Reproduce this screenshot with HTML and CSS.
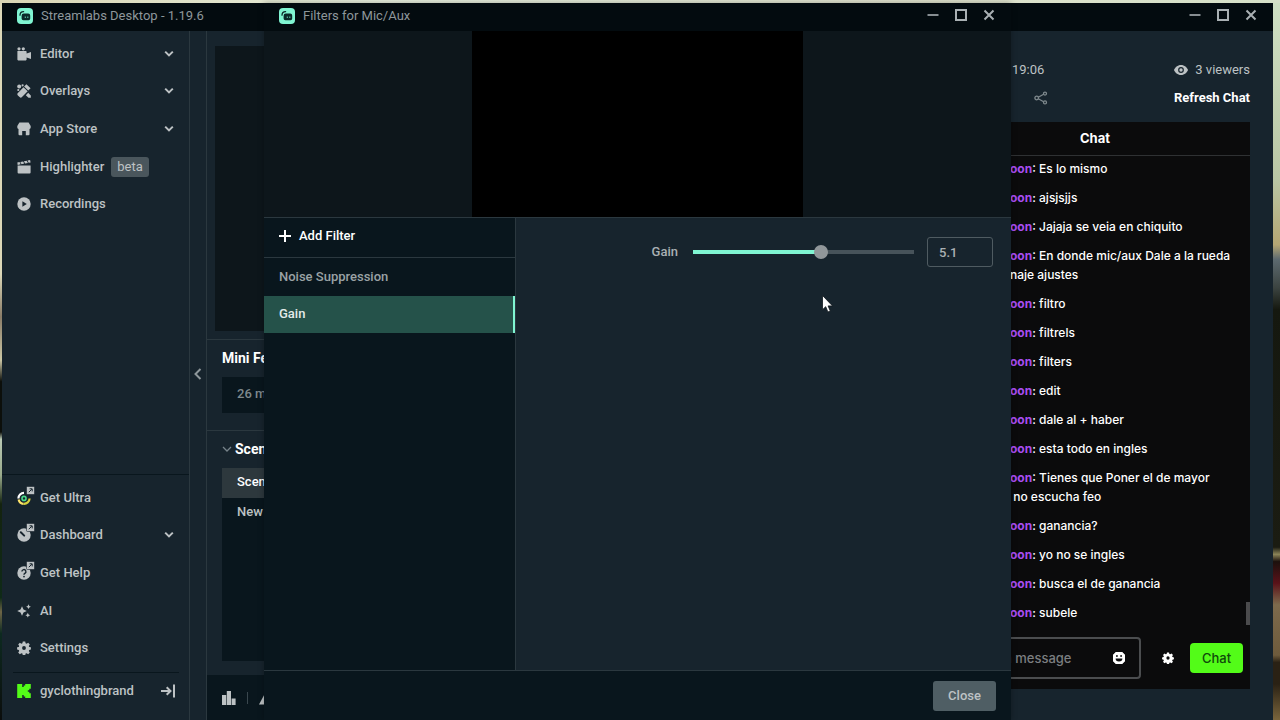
FILE: index.html
```html
<!DOCTYPE html>
<html lang="en">

<head>
    <meta charset="UTF-8">
    <meta name="viewport" content="width=device-width, initial-scale=1.0">
    <title>Streamlabs Desktop</title>
    <link rel="stylesheet" href="styles.css">
</head>

<body>
    <!--shared icons-->
    <svg class="sprite" aria-hidden="true">
        <symbol id="logo" viewBox="0 0 16 16">
            <rect width="16" height="16" rx="4" fill="#80f5d2" />
            <path d="M3 7.2C3 4.8 4.4 3.6 6.6 3.6" fill="none" stroke="#0b2a2a" stroke-width="1.3" stroke-linecap="round" />
            <path d="M6.8 5.6h4.4a2 2 0 0 1 2 2v3a1.6 1.6 0 0 1-1.6 1.6H6.4a1.8 1.8 0 0 1-1.8-1.8V7.8a2.2 2.2 0 0 1 2.2-2.2z" fill="#0b2a2a" />
            <path d="M8.3 8.6v1.2M10.8 8.6v1.2" stroke="#80f5d2" stroke-width="1" />
        </symbol>
        <symbol id="chevron" viewBox="0 0 10 10">
            <path d="M1.2 2.6l3.800 3.800L8.800 2.600" fill="none" stroke="currentColor" stroke-width="2" />
        </symbol>
        <symbol id="external" viewBox="0 0 9 9">
            <rect x="0.5" y="0.5" width="8" height="8" rx="1" fill="#bdc2c4" stroke="#17242d" stroke-width=".6" />
            <path d="M2.8 6.2l3-3M3.6 2.8h2.6v2.6" fill="none" stroke="#17242d" stroke-width="1" />
        </symbol>
        <symbol id="minimize" viewBox="0 0 12 12"><path d="M0.5 6h11" stroke="currentColor" stroke-width="1.6" /></symbol>
        <symbol id="maximize" viewBox="0 0 12 12"><rect x="1" y="1" width="10" height="10" fill="none" stroke="currentColor" stroke-width="2" /></symbol>
        <symbol id="close" viewBox="0 0 12 12"><path d="M1.5 1.5l9 9M10.5 1.5l-9 9" stroke="currentColor" stroke-width="2" /></symbol>
        <symbol id="gear" viewBox="0 0 14 14">
            <path fill-rule="evenodd" fill="currentColor" d="M5.8 0.5h2.4l.4 1.8 1 .4 1.6-1 1.6 1.7-1 1.5.4 1 1.7.4v2.2l-1.7.5-.4 1 1 1.5-1.6 1.7-1.6-1-1 .4-.4 1.8H5.8l-.4-1.8-1-.4-1.6 1-1.6-1.7 1-1.5-.4-1-1.7-.5V6.3l1.7-.4.4-1-1-1.5 1.6-1.7 1.6 1 1-.4zM7 5.1a1.9 1.9 0 1 0 0 3.8 1.9 1.9 0 0 0 0-3.8z" />
        </symbol>
    </svg>

    <div class="app">
        <header class="titlebar">
            <svg class="logo"><use href="#logo" /></svg>
            <h1>Streamlabs Desktop - 1.19.6</h1>
            <div class="win-btns">
                <button aria-label="Minimize"><svg><use href="#minimize" /></svg></button>
                <button aria-label="Maximize"><svg><use href="#maximize" /></svg></button>
                <button aria-label="Close window"><svg><use href="#close" /></svg></button>
            </div>
        </header>

        <div class="columns">
            <!--side nav-->
            <aside class="sidebar">
                <nav class="nav">
                    <a href="#">
                        <svg class="icon" viewBox="0 0 14 14" fill="currentColor"><circle cx="2" cy="1.8" r="1.6" /><circle cx="6.3" cy="1.8" r="1.6" /><path d="M0.4 4h8.4a.8.8 0 0 1 .8.8v1.6L14 5v7l-4.4-1.4v2a.8.8 0 0 1-.8.8H1.2a.8.8 0 0 1-.8-.8z" /></svg>
                        <span>Editor</span>
                        <svg class="chevron"><use href="#chevron" /></svg>
                    </a>
                    <a href="#">
                        <svg class="icon" viewBox="0 0 14 14" fill="currentColor"><path d="M9.400.3l4.200 4-2.300 2.300-4.200-4zM6.500 3.200l4.200 4-5.700 5.900a1.700 1.700 0 0 1-2.400 0L.9 11.500a1.700 1.700 0 0 1 0-2.400z" /><circle cx="2.200" cy="2.600" r="2" /><circle cx="5.600" cy="1.300" r="1.100" /><circle cx="1.300" cy="6" r="1.100" /><path d="M11.200 8.800l2.600 2.700v2.300h-2.300l-2.700-2.600z" /></svg>
                        <span>Overlays</span>
                        <svg class="chevron"><use href="#chevron" /></svg>
                    </a>
                    <a href="#">
                        <svg class="icon" viewBox="0 0 14 14" fill="currentColor"><path d="M2.4.5h9.2L13.7 4v1.5a1.8 1.8 0 0 1-1.200 1.600v5.200a1 1 0 0 1-1 1H8.800V9H5.200v4.300H2.500a1 1 0 0 1-1-1V7.100A1.800 1.800 0 0 1 .3 5.500V4z" /></svg>
                        <span>App Store</span>
                        <svg class="chevron"><use href="#chevron" /></svg>
                    </a>
                    <a href="#">
                        <svg class="icon" viewBox="0 0 14 14" fill="currentColor"><path d="M.6 5.600h13v6.800a1 1 0 0 1-1 1h-11a1 1 0 0 1-1-1zM.3 2.600l2.200-.5 1.200 2.200-3 .7zM3.300 1.900l2.800-.5 1.200 2.200-2.800.6zM6.900 1.200l2.800-.5 1.200 2.200-2.800.6zM10.500.6l2.600-.5.500 2.300-1.900.4z" /></svg>
                        <span>Highlighter</span>
                        <em class="badge">beta</em>
                    </a>
                    <a href="#">
                        <svg class="icon" viewBox="0 0 14 14"><circle cx="7" cy="7" r="6.700" fill="currentColor" /><path d="M5.400 4.200l4.400 2.800-4.400 2.800z" fill="#17242d" /></svg>
                        <span>Recordings</span>
                    </a>
                </nav>

                <div class="side-bottom">
                    <nav class="nav">
                        <a href="#">
                            <span class="icon-wrap">
                                <svg class="icon" viewBox="0 0 14 14" fill="none" stroke-width="2.200"><path d="M1.400 7.500A5.600 5.600 0 0 1 7 1.900" stroke="#fff" /><path d="M1.600 8.500a5.600 5.600 0 0 0 5 4.300" stroke="#ffe46a" /><path d="M6.600 12.800A5.600 5.600 0 0 0 12.600 7.500" stroke="#d6d43f" /><circle cx="7" cy="7.400" r="2" stroke="#48d98a" stroke-width="1.600" /></svg>
                                <svg class="ext"><use href="#external" /></svg>
                            </span>
                            <span>Get Ultra</span>
                        </a>
                        <a href="#">
                            <span class="icon-wrap">
                                <svg class="icon" viewBox="0 0 14 14"><circle cx="7" cy="7" r="6.700" fill="currentColor" /><path d="M3.800 4.200l3.400 3.400" stroke="#17242d" stroke-width="2" stroke-linecap="round" /></svg>
                                <svg class="ext"><use href="#external" /></svg>
                            </span>
                            <span>Dashboard</span>
                            <svg class="chevron"><use href="#chevron" /></svg>
                        </a>
                        <a href="#">
                            <span class="icon-wrap">
                                <svg class="icon" viewBox="0 0 14 14"><circle cx="7" cy="7" r="6.700" fill="currentColor" /><path d="M4.900 5.600a2 2 0 1 1 3 1.700c-.7.400-.9.700-.9 1.400" fill="none" stroke="#17242d" stroke-width="1.400" /><circle cx="7" cy="10.600" r=".9" fill="#17242d" /></svg>
                                <svg class="ext"><use href="#external" /></svg>
                            </span>
                            <span>Get Help</span>
                        </a>
                        <a href="#">
                            <svg class="icon" viewBox="0 0 14 14" fill="currentColor"><path d="M5 2.200l1.500 3.300L9.800 7 6.500 8.500 5 11.800 3.500 8.500.2 7l3.300-1.500zM11.500.3l.8 1.600 1.600.8-1.600.8-.8 1.600-.8-1.600-1.600-.8 1.600-.8zM10.800 8.800l.8 1.600 1.600.8-1.600.8-.8 1.600-.8-1.600-1.600-.8 1.600-.8z" /></svg>
                            <span>AI</span>
                        </a>
                        <a href="#">
                            <svg class="icon"><use href="#gear" /></svg>
                            <span>Settings</span>
                        </a>
                    </nav>
                    <a class="account" href="#">
                        <svg class="icon" viewBox="0 0 14 14"><path d="M.2 0h5v3h1.500V1.500h1.500V0h5.600v4.800h-1.500v1.500h-1.500v1.400h1.500v1.500h1.500V14H8.200v-1.500H6.700V11H5.200v3h-5z" fill="#53fc18" /></svg>
                        <span>gyclothingbrand</span>
                        <svg class="logout" viewBox="0 0 14 14" fill="none" stroke="currentColor" stroke-width="2"><path d="M0 7h9M5.700 3.200L9.500 7l-3.800 3.800M13 .5v13" /></svg>
                    </a>
                </div>
            </aside>

            <button class="collapse" aria-label="Collapse side panel">
                <svg viewBox="0 0 10 12"><path d="M7.500 1L2.500 6l5 5" fill="none" stroke="currentColor" stroke-width="2" /></svg>
            </button>

            <!--editor-->
            <main class="editor">
                <div class="display"></div>
                <section class="feed">
                    <h2>Mini Feed</h2>
                    <p>26 m</p>
                </section>
                <section class="scenes">
                    <h2><svg viewBox="0 0 10 10"><path d="M1 3l4 4 4-4" fill="none" stroke="#77838a" stroke-width="1.300" /></svg>Scenes</h2>
                    <ul>
                        <li class="active">Scene</li>
                        <li>New</li>
                    </ul>
                </section>
                <footer class="status">
                    <svg viewBox="0 0 14 14" fill="currentColor"><path d="M0 4h4.200v10H0zM4.800 0H9v14H4.800zM9.600 7.500h4V14h-4z" /></svg>
                    <i></i>
                    <svg viewBox="0 0 14 14" fill="currentColor"><path d="M7 .5l7 13H0z" /></svg>
                </footer>
            </main>

            <!--live dock-->
            <aside class="dock">
                <div class="dock-row">
                    <span class="time">19:06</span>
                    <span class="viewers">
                        <svg viewBox="0 0 14 10"><path d="M7 0C3.500 0 1 2.500 0 5c1 2.500 3.500 5 7 5s6-2.500 7-5c-1-2.500-3.500-5-7-5z" fill="currentColor" /><circle cx="7" cy="5" r="2.900" fill="#17242d" /><circle cx="7" cy="5" r="1.700" fill="currentColor" /></svg>
                        3 viewers
                    </span>
                </div>
                <div class="dock-row">
                    <button class="share" aria-label="Share">
                        <svg viewBox="0 0 14 14" fill="none" stroke="currentColor" stroke-width="1.300"><circle cx="2.700" cy="7" r="1.800" /><circle cx="11" cy="2.600" r="1.500" /><circle cx="11" cy="11.400" r="1.500" /><path d="M4.300 6.200l5.300-2.900M4.300 7.800l5.300 2.900" /></svg>
                    </button>
                    <a class="refresh" href="#">Refresh Chat</a>
                </div>
                <section class="chat">
                    <h2>Chat</h2>
                    <div class="messages">
                        <p><b>oon</b>: Es lo mismo</p>
                        <p><b>oon</b>: ajsjsjjs</p>
                        <p><b>oon</b>: Jajaja se veia en chiquito</p>
                        <p><b>oon</b>: En donde mic/aux Dale a la rueda<br>naje ajustes</p>
                        <p><b>oon</b>: filtro</p>
                        <p><b>oon</b>: filtrels</p>
                        <p><b>oon</b>: filters</p>
                        <p><b>oon</b>: edit</p>
                        <p><b>oon</b>: dale al + haber</p>
                        <p><b>oon</b>: esta todo en ingles</p>
                        <p><b>oon</b>: Tienes que Poner el de mayor<br>&nbsp;no escucha feo</p>
                        <p><b>oon</b>: ganancia?</p>
                        <p><b>oon</b>: yo no se ingles</p>
                        <p><b>oon</b>: busca el de ganancia</p>
                        <p><b>oon</b>: subele</p>
                        <div class="scroll-thumb"></div>
                    </div>
                    <form class="send">
                        <div class="field">
                            <input type="text" placeholder="Send a message" aria-label="Send a message">
                            <svg viewBox="0 0 12 12"><path d="M3 0h6l3 3v6l-3 3H3L0 9V3z" fill="#fff" stroke="#fff" stroke-linejoin="round" stroke-width=".5" /><path d="M3 3.200h1.800v1.600H3zM7.200 3.200H9v1.600H7.200zM2.600 6.500h6.800a3.400 2.900 0 0 1-6.800 0z" fill="#0b0b0c" /></svg>
                        </div>
                        <button type="button" class="chat-gear" aria-label="Chat settings"><svg viewBox="0 0 14 14"><use href="#gear" /></svg></button>
                        <button type="button" class="chat-btn">Chat</button>
                    </form>
                </section>
            </aside>
        </div>
    </div>

    <!--filters window-->
    <div class="dialog">
        <header class="titlebar">
            <svg class="logo"><use href="#logo" /></svg>
            <h1>Filters for Mic/Aux</h1>
            <div class="win-btns">
                <button aria-label="Minimize"><svg><use href="#minimize" /></svg></button>
                <button aria-label="Maximize"><svg><use href="#maximize" /></svg></button>
                <button aria-label="Close window"><svg><use href="#close" /></svg></button>
            </div>
        </header>
        <div class="preview"><div class="video"></div></div>
        <div class="filters">
            <div class="filter-list">
                <button class="add">
                    <svg viewBox="0 0 12 12"><path d="M6 0v12M0 6h12" stroke="currentColor" stroke-width="2" /></svg>
                    Add Filter
                </button>
                <ul>
                    <li>Noise Suppression</li>
                    <li class="active">Gain</li>
                </ul>
            </div>
            <div class="filter-form">
                <label for="gain">Gain</label>
                <input type="range" id="gain" min="-30" max="30" step="0.1" value="5.1">
                <input type="text" class="num" value="5.1" aria-label="Gain value">
                <svg class="cursor" viewBox="0 0 11 18"><path d="M.5.5v14.200l3.200-3 2.200 5.300 2.400-1-2.200-5.100h4.400z" fill="#fff" stroke="#10181d" stroke-width=".8" /></svg>
            </div>
        </div>
        <footer class="dialog-footer">
            <button>Close</button>
        </footer>
    </div>
</body>

</html>
```

FILE: styles.css
```css
* {
    margin: 0;
    padding: 0;
    box-sizing: border-box;
}

body {
    position: relative;
    height: 100vh;
    min-height: 640px;
    padding: 3px 7px 0 2px;
    overflow: hidden;
    font: 500 13px/20px Roboto, "Liberation Sans", sans-serif;
    color: #bdc2c4;
    /*wallpaper seen around the window*/
    background:
        linear-gradient(90deg, #d9d5b4, #e6eedd 30%, #dfe2cd 70%, #d5e0c8) top / 100% 3px no-repeat,
        linear-gradient(#dcd8b8 38%, #8a7d68 44%, #cbc6a4 50%, #0c0f0b 53%, #0c0f0b 60%, #b9c9b4 61%, #9aab8c 66%, #14230f 70%, #0f2a17 83%, #6d6546 85%, #0d2a20 88%, #0b0d0c) left / 50% 100% no-repeat,
        linear-gradient(#cfe0c4, #b9c6a4 25%, #b5a673 34%, #5d6a70 36%, #3b4340 40%, #15180f 43%, #1b1c12 76%, #8b8458 77%, #1c110d 78%, #5a1219 81%, #7d6a4c 84%, #6e5b3c 91%, #2a2114 92%, #2a2114 95%, #7a653c) right / 50% 100% no-repeat;
}

ul {
    list-style: none;
}

a {
    color: inherit;
    text-decoration: none;
}

button {
    border: 0;
    background: none;
    color: inherit;
    font: inherit;
}

svg {
    display: block;
    flex: none;
}

.sprite {
    position: absolute;
    width: 0;
    height: 0;
}

.app {
    display: flex;
    flex-direction: column;
    height: 100%;
    background-color: #17242d;
}

/*title bars*/
.titlebar {
    display: flex;
    align-items: center;
    flex: none;
    height: 28px;
    padding: 0 16px 2px 15px;
    background-color: #030b0f;
    color: #8e979b;
}

.titlebar .logo {
    width: 16px;
    height: 16px;
    margin-right: 8px;
}

.titlebar h1 {
    font-size: 13px;
    font-weight: 400;
}

.win-btns {
    display: flex;
    gap: 16px;
    margin-left: auto;
    padding-bottom: 2px;
    color: #a9b0b3;
}

.win-btns svg {
    width: 12px;
    height: 12px;
}

.columns {
    display: flex;
    flex: 1;
    min-height: 0;
}

/*side nav*/
.sidebar {
    display: flex;
    flex-direction: column;
    width: 188px;
    padding-top: 4px;
    border-right: 1px solid #2b383f;
}

.nav {
    display: flex;
    flex-direction: column;
    height: 188px;
}

.nav a,
.account {
    display: flex;
    flex: 1;
    align-items: center;
    padding: 0 15px;
}

.icon {
    width: 14px;
    height: 14px;
}

.nav a > .icon,
.account > .icon,
.icon-wrap {
    margin-right: 9px;
}

.icon-wrap {
    position: relative;
}

.ext {
    position: absolute;
    top: -5px;
    right: -4px;
    width: 9px;
    height: 9px;
}

.chevron {
    width: 10px;
    height: 10px;
    margin-left: auto;
}

.badge {
    margin-left: 7px;
    padding: 0 6px;
    border-radius: 3px;
    background-color: #4a565c;
    font-style: normal;
    font-weight: 400;
}

.side-bottom {
    margin-top: auto;
    padding: 4px 0 10px;
    border-top: 1px solid #09161d;
}

.account {
    height: 38px;
    margin: 5px 10px 0 11px;
    padding: 0 4px 2px;
    border-top: 1px solid #09161d;
}

.logout {
    width: 14px;
    height: 14px;
    margin-left: auto;
}

.collapse {
    width: 17px;
    padding: 0 3px 4px;
    border-right: 1px solid #2b383f;
    color: #8e979b;
}

.collapse svg {
    width: 10px;
    height: 12px;
}

/*editor*/
.editor {
    display: flex;
    flex: 1;
    flex-direction: column;
    min-width: 0;
    color: #fff;
}

.display {
    flex: 1;
    margin: 15px 8px 8px;
    background-color: #0d161b;
}

.feed {
    padding: 8px 15px 17px;
    border-top: 1px solid #2b383f;
}

.editor h2 {
    display: flex;
    align-items: center;
    gap: 3px;
    font-size: 14px;
    font-weight: 700;
}

.feed p {
    margin-top: 9px;
    padding: 7px 15px 9px;
    background-color: #09161d;
    color: #7f898d;
}

.scenes {
    padding: 8px 15px 14px;
    border-top: 1px solid #2b383f;
}

.scenes h2 svg {
    width: 10px;
    height: 10px;
}

.scenes ul {
    height: 193px;
    margin-top: 9px;
    background-color: #09161d;
}

.scenes li {
    padding: 4px 15px 6px;
    color: #bdc2c4;
}

.scenes .active {
    background-color: #2d383d;
    color: #fff;
}

.status {
    display: flex;
    align-items: center;
    gap: 11px;
    height: 45px;
    padding: 0 15px;
    background-color: #09161d;
    color: #bdc2c4;
}

.status svg {
    width: 14px;
    height: 14px;
}

.status i {
    width: 1px;
    height: 12px;
    background-color: #3a474e;
}

/*live dock*/
.dock {
    display: flex;
    flex-direction: column;
    width: 333px;
    padding: 29px 23px 31px 0;
}

.dock-row {
    display: flex;
    align-items: center;
    justify-content: space-between;
    height: 20px;
    margin-bottom: 8px;
    padding-left: 72px;
}

.time,
.viewers {
    font-weight: 400;
}

.viewers {
    display: flex;
    align-items: center;
    gap: 7px;
}

.viewers svg {
    width: 14px;
    height: 10px;
}

.share {
    margin-left: 22px;
    color: #7f898d;
}

.share svg {
    width: 14px;
    height: 14px;
}

.refresh {
    color: #fff;
    font-weight: 700;
}

.chat {
    display: flex;
    flex: 1;
    flex-direction: column;
    margin-top: 6px;
    min-height: 0;
    background-color: #0b0b0c;
    color: #fff;
    font-family: Inter, "Liberation Sans", sans-serif;
}

.chat h2 {
    padding: 6px 0 7px;
    border-bottom: 1px solid #2f3133;
    font-size: 13px;
    text-align: center;
}

.messages {
    position: relative;
    flex: 1;
    min-height: 0;
    padding: 3px 0 0 70px;
    font-size: 12px;
    line-height: 19px;
}

.messages p {
    margin-bottom: 10px;
    white-space: nowrap;
}

.messages b {
    color: #a84df0;
    font-weight: 700;
}

.scroll-thumb {
    position: absolute;
    right: 0;
    bottom: 4px;
    width: 4px;
    height: 23px;
    background-color: #4b4b4d;
}

.send {
    display: flex;
    align-items: center;
    padding: 8px 7px 10px 15px;
}

.field {
    display: flex;
    flex: 1;
    align-items: center;
    min-width: 0;
    height: 42px;
    padding: 0 14px 0 12px;
    border: 2px solid #4b4d4f;
    border-radius: 4px;
}

.field input {
    flex: 1;
    min-width: 0;
    border: 0;
    background: none;
    color: #fff;
    font: inherit;
}

.field input::placeholder {
    color: #7b7e80;
}

.field svg,
.chat-gear svg {
    width: 12px;
    height: 12px;
}

.chat-gear {
    margin: 0 16px 0 21px;
}

.chat-btn {
    width: 53px;
    height: 30px;
    border-radius: 4px;
    background-color: #53fc18;
    color: #0f4a0b;
}

/*filters window*/
.dialog {
    position: absolute;
    top: 3px;
    right: 269px;
    bottom: 0;
    left: 264px;
    display: flex;
    flex-direction: column;
    background-color: #09161d;
    box-shadow: 0 0 6px rgba(0, 0, 0, 0.3);
}

.preview {
    display: flex;
    justify-content: center;
    height: 187px;
    border-bottom: 1px solid #2b383f;
    background-color: #0d161b;
}

.video {
    height: 100%;
    aspect-ratio: 16 / 9;
    background-color: #000;
}

.filters {
    display: flex;
    flex: 1;
    background-color: #17242d;
}

.filter-list {
    width: 252px;
    border-right: 1px solid #2b383f;
    background-color: #09161d;
}

.add {
    display: flex;
    align-items: center;
    gap: 8px;
    width: 100%;
    height: 40px;
    padding: 0 15px 4px;
    border-bottom: 1px solid #2b383f;
    color: #fff;
}

.add svg {
    width: 12px;
    height: 12px;
}

.filter-list ul {
    padding-top: 1px;
}

.filter-list li {
    padding: 8px 15px 9px;
    color: #9aa2a5;
}

.filter-list .active {
    border-right: 2px solid #80f5d2;
    background-color: #25524a;
    color: #e3ebe9;
}

.filter-form {
    position: relative;
    display: flex;
    flex: 1;
    align-items: center;
    justify-content: flex-end;
    height: 30px;
    margin-top: 19px;
    padding: 0 18px;
    color: #a9b0b3;
}

.filter-form input[type="range"] {
    width: 221px;
    height: 14px;
    margin: 0 13px 0 15px;
    appearance: none;
    background: linear-gradient(90deg, #80f5d2 58%, #47535a 58%) center / 100% 4px no-repeat;
}

.filter-form input[type="range"]::-webkit-slider-thumb {
    appearance: none;
    width: 14px;
    height: 14px;
    border-radius: 50%;
    background-color: #91979a;
}

.num {
    width: 66px;
    height: 30px;
    padding: 0 11px;
    border: 1px solid #4f5b61;
    border-radius: 3px;
    background: none;
    color: #a9b0b3;
    font: inherit;
}

.cursor {
    position: absolute;
    top: 58px;
    right: 178px;
    width: 11px;
    height: 18px;
}

.dialog-footer {
    display: flex;
    align-items: center;
    justify-content: flex-end;
    height: 50px;
    padding: 0 15px;
    border-top: 1px solid #2b383f;
}

.dialog-footer button {
    width: 63px;
    height: 30px;
    border-radius: 3px;
    background-color: #4f5e64;
}
```
